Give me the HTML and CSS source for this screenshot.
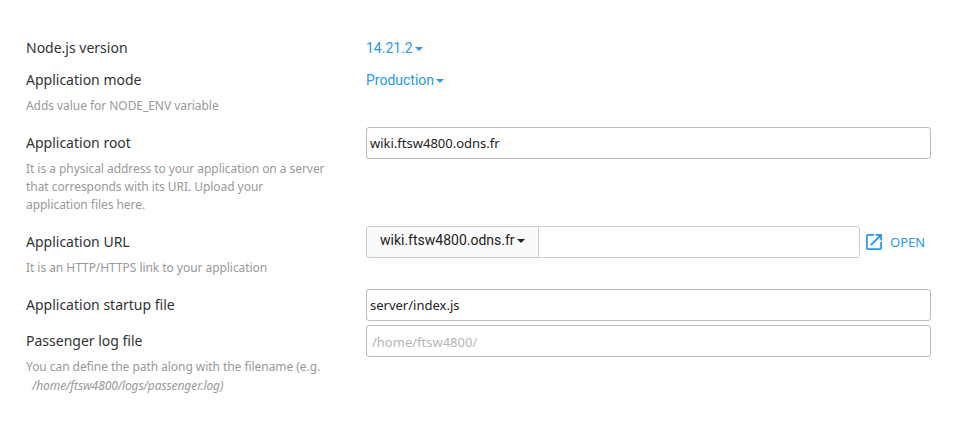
FILE: index.html
```html
<!DOCTYPE html>
<html lang="en">
<head>
<meta charset="utf-8">
<title>Node.js application</title>
<link rel="stylesheet" href="styles.css">
</head>
<body>
<main class="form">
  <div class="row version">
    <div class="label">Node.js version</div>
    <div class="control"><a class="select">14.21.2<i class="caret"></i></a></div>
  </div>
  <div class="row mode">
    <div><div class="label">Application mode</div><p class="hint">Adds value for NODE_ENV variable</p></div>
    <div class="control"><a class="select">Production<i class="caret"></i></a></div>
  </div>
  <div class="row root">
    <div><div class="label">Application root</div><p class="hint">It is a physical address to your application on a server<br>that corresponds with its URI. Upload your<br>application files here.</p></div>
    <div class="field">wiki.ftsw4800.odns.fr</div>
  </div>
  <div class="row url">
    <div><div class="label">Application URL</div><p class="hint">It is an HTTP/HTTPS link to your application</p></div>
    <div class="url-control">
      <div class="domain">wiki.ftsw4800.odns.fr<i class="caret"></i></div>
      <div class="path"></div>
      <a class="open"><svg width="16" height="16" viewBox="0 0 16 16" fill="none" stroke="currentColor" stroke-width="1.8"><path d="M8 .9H1.9a1 1 0 0 0-1 1v12.2a1 1 0 0 0 1 1h12.2a1 1 0 0 0 1-1V8M9.5 .9h5.6v5.6M15 1 4.8 11.2"/></svg><span>OPEN</span></a>
    </div>
  </div>
  <div class="row startup">
    <div class="label">Application startup file</div>
    <div class="field">server/index.js</div>
  </div>
  <div class="row log">
    <div><div class="label">Passenger log file</div><p class="hint">You can define the path along with the filename (e.g.<br><em>/home/ftsw4800/logs/passenger.log)</em></p></div>
    <div class="field placeholder">/home/ftsw4800/</div>
  </div>
</main>
</body>
</html>
```
FILE: styles.css
```css
* { box-sizing: border-box; }
body { margin: 0; background: #fff; color: #333; font-family: "Noto Sans", sans-serif; font-size: 14px; }
.form { width: 905px; margin-left: 26px; padding-top: 32px; }
.row { display: grid; grid-template-columns: 340px 565px; align-items: start; }
.version { height: 32px; }
.mode { height: 63px; }
.root { height: 99px; }
.url { height: 63px; }
.startup { height: 36px; }
.label { height: 32px; line-height: 32px; white-space: nowrap; }
.hint { margin: 0; padding-top: 1px; color: #999; font-size: 12px; line-height: 18px; letter-spacing: -0.05px; white-space: nowrap; }
.hint em { display: inline-block; margin: 1px 0 0 6px; letter-spacing: -0.08px; }
.control { line-height: 32px; }
.select { color: #2a98ee; font-family: Roboto, sans-serif; }
.caret { display: inline-block; border: 4px solid transparent; border-top-color: currentColor; border-bottom: 0; margin-left: 2px; vertical-align: 2px; }
.field { height: 32px; border: 1px solid #bbb; border-radius: 3px; padding: 0 3px; line-height: 31px; font-size: 13px; color: #222; }
.placeholder { color: #b5b5b5; padding-left: 5px; line-height: 33px; }
.url-control { display: flex; height: 32px; }
.domain { width: 173px; padding-left: 13px; border: 1px solid #ccc; border-radius: 3px 0 0 3px; background: #fafafa; font-family: Roboto, sans-serif; line-height: 27px; color: #222; white-space: nowrap; }
.path { width: 322px; margin-left: -1px; border: 1px solid #ccc; border-radius: 0 3px 3px 0; }
.open { display: flex; align-items: center; margin-left: 6px; gap: 8px; color: #2a98ee; font-size: 13px; }
```
